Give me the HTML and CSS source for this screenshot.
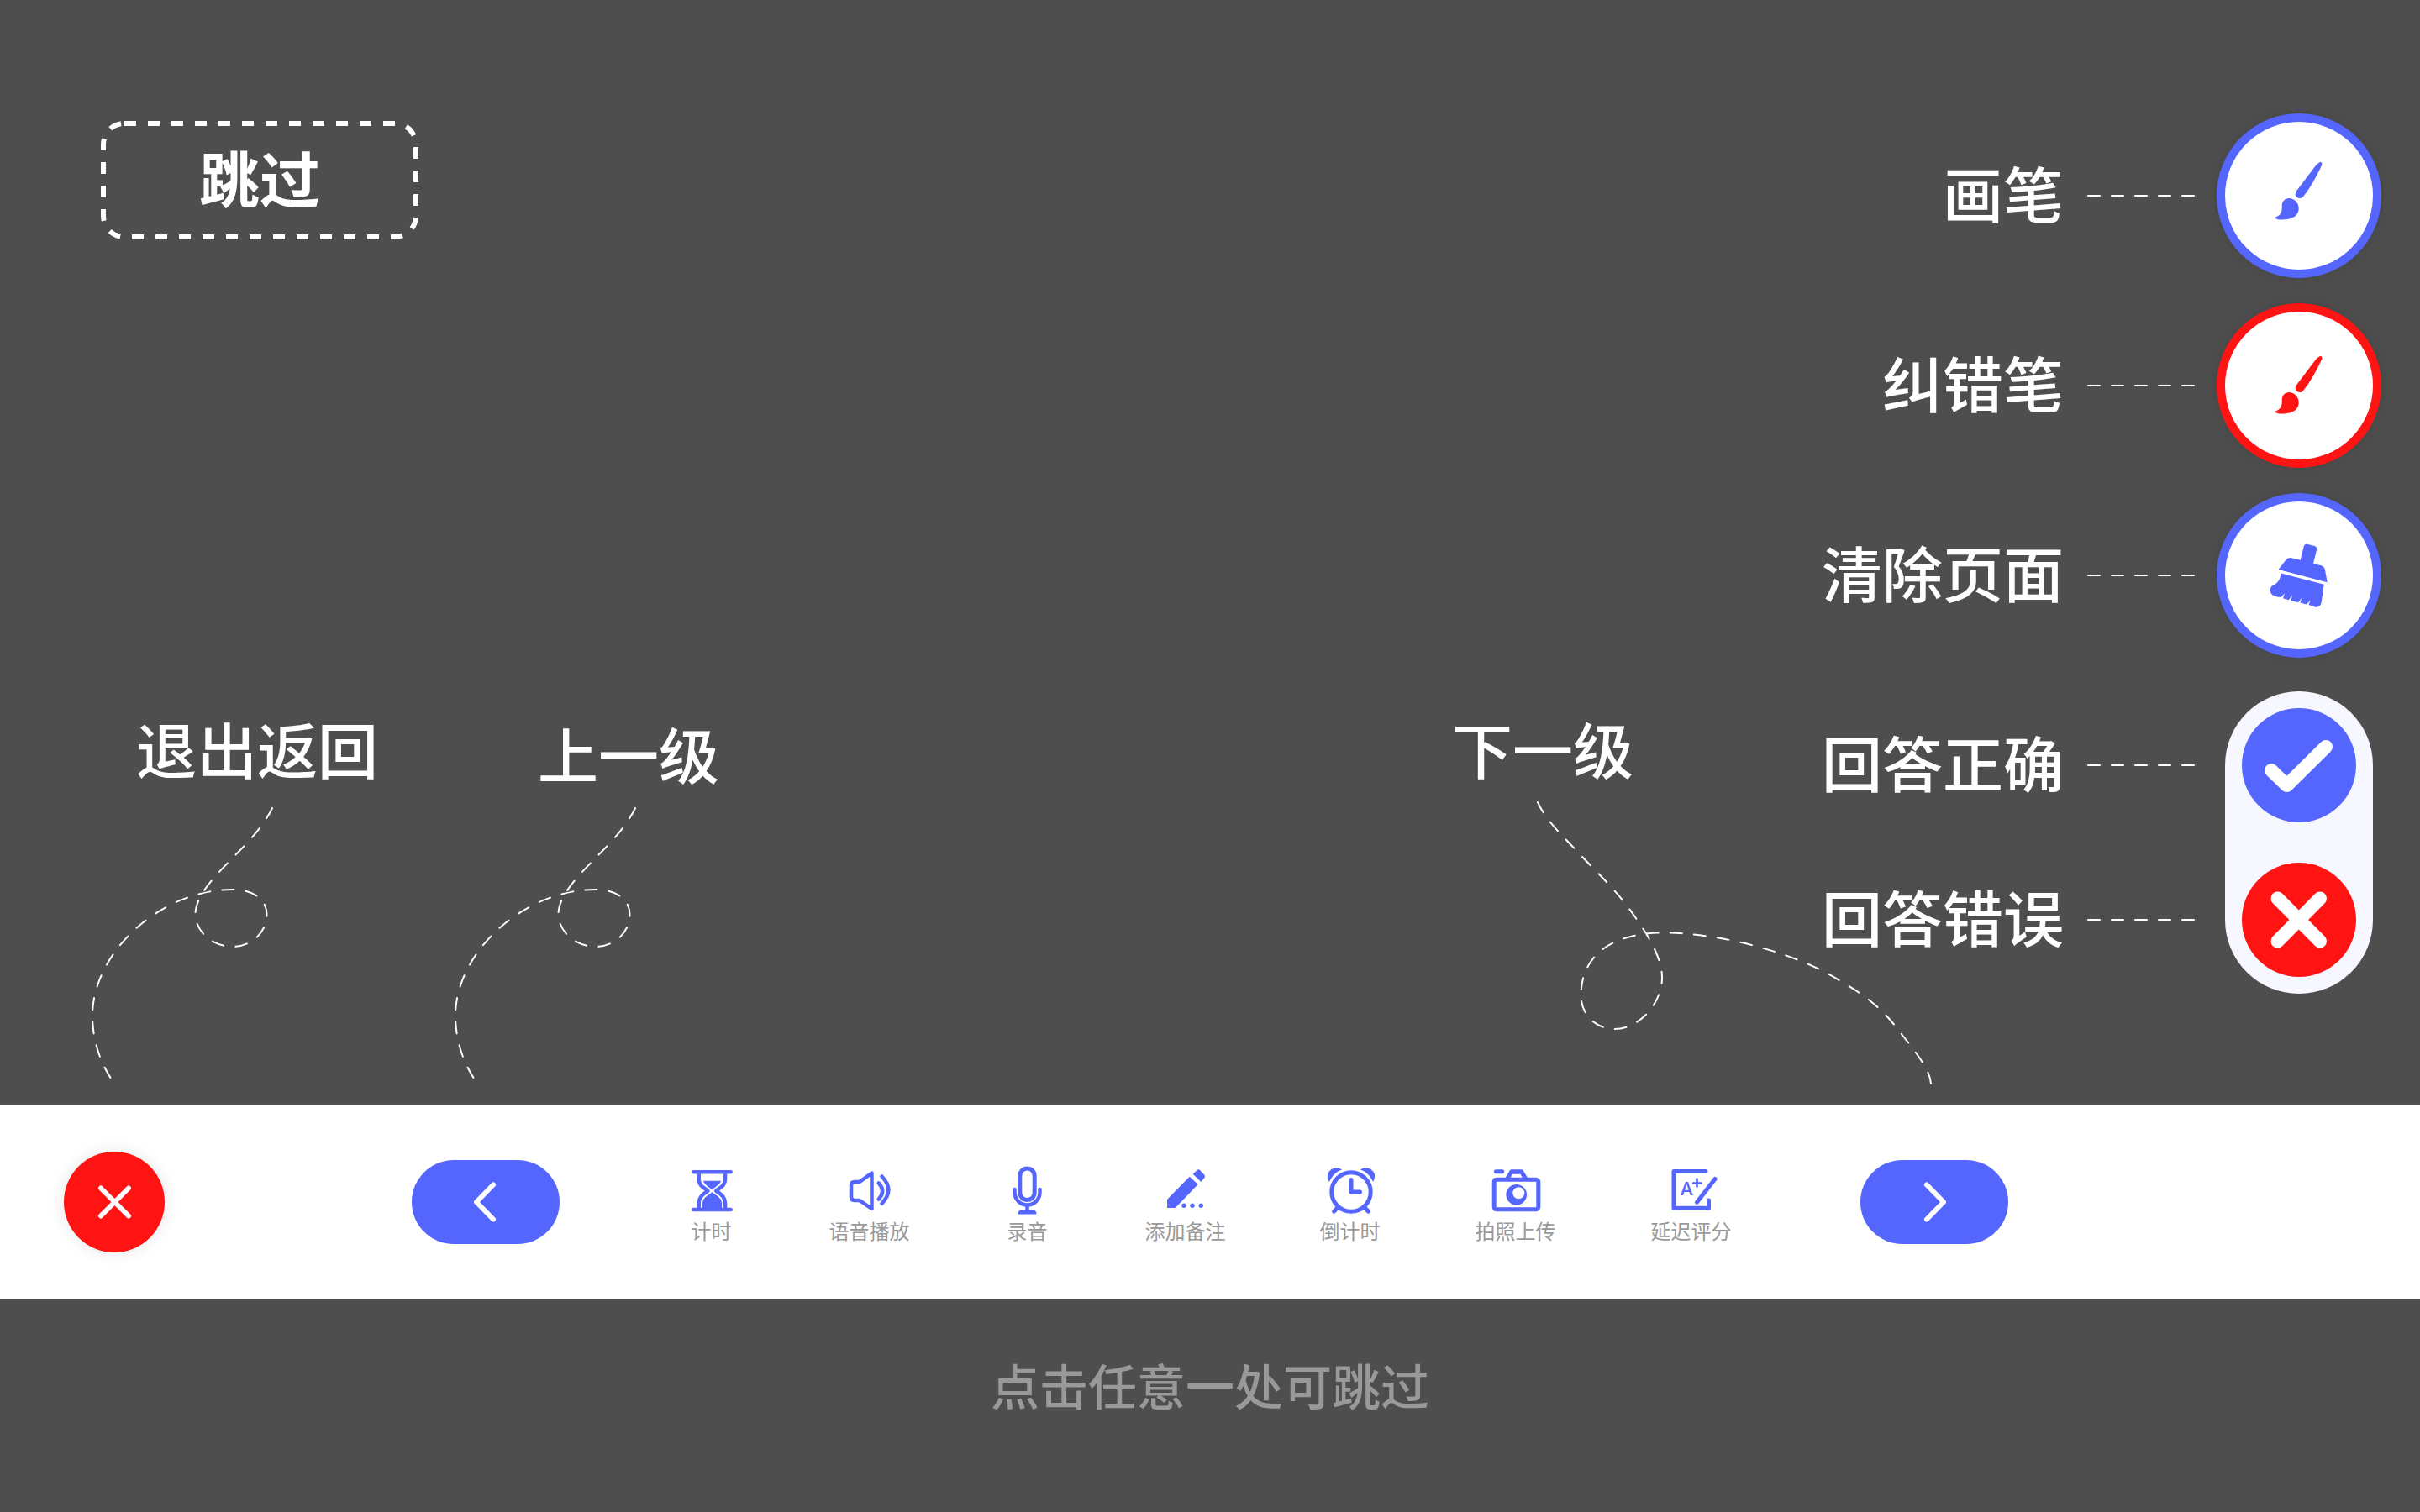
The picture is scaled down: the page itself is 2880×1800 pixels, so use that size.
FILE: index.html
```html
<!DOCTYPE html>
<html lang="zh-CN">
<head>
<meta charset="utf-8">
<meta name="viewport" content="width=device-width, initial-scale=1">
<title>批改引导</title>
<link rel="stylesheet" href="styles.css">
</head>
<body>
<main class="page">
  <section class="stage">
    <button class="skip" type="button">
      <svg class="skip-frame" aria-hidden="true"><rect class="skip-rect" x="3" y="3" rx="25"/></svg>
      <span>跳过</span>
    </button>

    <div class="callouts">
      <div class="callout callout-exit">
        <p class="callout-text">退出返回</p>
        <svg class="curve" width="220" height="332" viewBox="108 960 220 332" aria-hidden="true"><path pathLength="658" d="M324 962C315 981 297 1001 280 1018C262 1037 232.500 1064 232.500 1088C232.500 1109 253 1127 277 1127C299 1127 317.500 1110 317.500 1089C317.500 1069 299 1059 277 1059C190 1059 110 1135 110 1209C110 1236 118 1262 131.500 1283"/></svg>
      </div>
      <div class="callouts-nav">
        <div class="callout callout-prev">
          <p class="callout-text">上一级</p>
          <svg class="curve" width="220" height="332" viewBox="108 960 220 332" aria-hidden="true"><path pathLength="658" d="M324 962C315 981 297 1001 280 1018C262 1037 232.500 1064 232.500 1088C232.500 1109 253 1127 277 1127C299 1127 317.500 1110 317.500 1089C317.500 1069 299 1059 277 1059C190 1059 110 1135 110 1209C110 1236 118 1262 131.500 1283"/></svg>
        </div>
        <div class="callout callout-next">
          <p class="callout-text">下一级</p>
          <svg class="curve" width="472" height="340" viewBox="1828 952 472 340" aria-hidden="true"><path pathLength="938" d="M1830 955C1841 979 1862 997 1883 1020C1903 1041 1923 1060 1939 1082C1957 1107 1978 1137 1978 1164C1978 1195 1950 1225 1922 1225C1898 1225 1881.500 1207 1881.500 1185C1881.500 1137 1919 1110.500 1980 1110.500C2050 1110.500 2140 1136 2189 1167C2213 1181 2235 1196 2253.500 1219C2277 1249 2297 1272 2298 1290"/></svg>
        </div>
      </div>
    </div>

    <div class="side">
      <div class="side-row">
        <label class="side-label" for="pen">画笔</label>
        <svg class="leader" width="128" height="4" aria-hidden="true"><path d="M1 2H128"/></svg>
        <button class="ring ring-blue" id="pen" type="button">
          <svg width="100" height="100" viewBox="0 0 100 100" aria-hidden="true"><path d="M76 10C78 10.500 77.500 13 76.500 15C70 29 63 41 55.500 50.500C53 54 48 54 46 50C45 47 46.500 45 48 43L70 14C72 12 74 10 76 10Z"/><path d="M21 76C27 74 30 71 29.700 63C29.500 57 33 53 38.300 53C44 53 49.700 58 49.700 65C49.700 72 45 78.500 29 78.500C26 78.500 22.500 78 21 76Z"/></svg>
        </button>
      </div>
      <div class="side-row">
        <label class="side-label" for="fix">纠错笔</label>
        <svg class="leader" width="128" height="4" aria-hidden="true"><path d="M1 2H128"/></svg>
        <button class="ring ring-red" id="fix" type="button">
          <svg width="100" height="100" viewBox="0 -5 100 100" aria-hidden="true"><path d="M76 10C78 10.500 77.500 13 76.500 15C70 29 63 41 55.500 50.500C53 54 48 54 46 50C45 47 46.500 45 48 43L70 14C72 12 74 10 76 10Z"/><path d="M21 76C27 74 30 71 29.700 63C29.500 57 33 53 38.300 53C44 53 49.700 58 49.700 65C49.700 72 45 78.500 29 78.500C26 78.500 22.500 78 21 76Z"/></svg>
        </button>
      </div>
      <div class="side-row">
        <label class="side-label" for="clear">清除页面</label>
        <svg class="leader" width="128" height="4" aria-hidden="true"><path d="M1 2H128"/></svg>
        <button class="ring ring-blue" id="clear" type="button">
          <svg width="100" height="100" viewBox="0 0 100 100" aria-hidden="true"><path d="M59.500 12.700Q56.500 12.500 55.700 15.500L51.700 31.700L41 29.200Q37 28.600 34.500 31.500L25.500 43L83.700 58.300L81 43.500Q80 39.200 76.500 38.300L67 36L71 19.500Q71.500 15.800 68.500 15Z"/><path d="M28.700 47.500L79.700 60.800L76.700 82Q75.300 88.500 69.500 87.700L61.500 85L63.700 79.500L59 84.600L51.300 82.500L53.700 76.500L49 82.200L40.300 79.800L42 73.800L37.700 79.200L31 77.200L32.900 71.200L28.300 76.200L22 75Q15.500 73 15.700 67.200Q16.200 62 21.700 60.500Q27.500 56.500 28.700 47.500Z"/></svg>
        </button>
      </div>
      <div class="verdict">
        <div class="verdict-labels">
          <div class="verdict-row">
            <label class="side-label" for="right">回答正确</label>
            <svg class="leader" width="128" height="4" aria-hidden="true"><path d="M1 2H128"/></svg>
          </div>
          <div class="verdict-row">
            <label class="side-label" for="wrong">回答错误</label>
            <svg class="leader" width="128" height="4" aria-hidden="true"><path d="M1 2H128"/></svg>
          </div>
        </div>
        <div class="verdict-pill">
          <button class="mark mark-right" id="right" type="button"><svg width="136" height="136" viewBox="0 0 136 136" aria-hidden="true"><path d="M35 74L53.500 92L100 46"/></svg></button>
          <button class="mark mark-wrong" id="wrong" type="button"><svg width="136" height="136" viewBox="0 0 136 136" aria-hidden="true"><path d="M42.500 42.500L93 93.500M93 42.500L42.500 93.500"/></svg></button>
        </div>
      </div>
    </div>
  </section>

  <nav class="toolbar">
    <button class="close" type="button" aria-label="退出返回"><svg width="60" height="60" viewBox="0 0 60 60" aria-hidden="true"><path d="M14 13.500L47 46.500M47 13.500L14 46.500"/></svg></button>
    <div class="toolbar-main">
      <button class="step" type="button" aria-label="上一级"><svg width="60" height="60" viewBox="0 0 60 60" aria-hidden="true"><path d="M39 9.500L19 30L39 50.500"/></svg></button>
      <div class="tools">
        <div class="tools-group">
          <button class="tool" type="button">
            <svg class="tool-icon" viewBox="0 0 64 64" aria-hidden="true"><path class="line" d="M10.300 14.200H54.700M10.300 59H54.700M16.700 15V22C16.700 30 21 32 27.500 36.700C20 41 16.700 45 16.700 51V58M48 15V22C48 30 43.700 32 37.200 36.700C44.700 41 48 45 48 51V58"/><path d="M22 24.700H43C41.500 29.500 37 31 32.400 35.500C27.500 31 23.500 29.500 22 24.700ZM32.400 38C36 42 44 44 44 51.500V58H21V51.500C21 44 29 42 32.400 38Z"/></svg>
            <span>计时</span>
          </button>
          <button class="tool" type="button">
            <svg class="tool-icon" viewBox="0 0 64 64" aria-hidden="true"><path class="line" d="M34.500 15.500L20 26H14Q10 26 10 30V44Q10 48 14 48H20L34.500 58ZM42.800 27.500Q51.500 37 42.800 46.500M46.500 19.500Q62 35.500 46.500 51.800"/></svg>
            <span>语音播放</span>
          </button>
          <button class="tool" type="button">
            <svg class="tool-icon" viewBox="0 0 64 64" aria-hidden="true"><rect class="line heavy" x="22.800" y="10" width="17.400" height="37.500" rx="8.700"/><path class="line" d="M16.500 35V38.500A15 15 0 0 0 46.500 38.500V35M31.500 54V61"/><path d="M20.500 64.500Q20.500 59.500 25 59.500H38Q42.500 59.500 42.500 64.500Z"/></svg>
            <span>录音</span>
          </button>
          <button class="tool" type="button">
            <svg class="tool-icon" viewBox="0 0 64 64" aria-hidden="true"><path d="M45.700 12Q47.300 10.500 49 12L54.500 18Q55.500 19.700 54.500 21L50.300 26L40.700 16.700ZM36.700 19.700L46.700 29L19.700 57H10V47Z"/><circle cx="30" cy="54.300" r="2.700"/><circle cx="40" cy="54.300" r="2.700"/><circle cx="50.300" cy="54.300" r="2.700"/></svg>
            <span>添加备注</span>
          </button>
        </div>
        <div class="tools-group tools-group-tight">
          <button class="tool" type="button">
            <svg class="tool-icon" viewBox="0 0 64 64" aria-hidden="true"><circle class="line heavy" cx="33" cy="38" r="23.200"/><path class="line heavy" d="M33 23.500V38H43.500M16.500 57L12.500 61.200M49.500 57L53.500 61.200"/><path d="M7 26C4 21 4 16.500 7.500 13C11 9 17 8 22 11.500C15 14 10 19 7 26ZM59 26C62 21 62 16.500 58.500 13C55 9 49 8 44 11.500C51 14 56 19 59 26Z"/></svg>
            <span>倒计时</span>
          </button>
          <button class="tool" type="button">
            <svg class="tool-icon" viewBox="0 0 64 64" aria-hidden="true"><rect class="line heavy" x="6.200" y="23.200" width="52.600" height="35.600" rx="3"/><path class="line heavy" d="M8.300 13.700H15.700"/><path fill-rule="evenodd" d="M19 22L24.700 12.500Q25.500 11.300 27 11.300H38.500Q40 11.300 40.800 12.500L46.500 22H40.500L37.300 16.700H28L25 22ZM32.700 29A12.300 12.300 0 1 0 32.700 53.600A12.300 12.300 0 1 0 32.700 29ZM35.300 32.300A7 7 0 1 1 35.300 46.300A7 7 0 1 1 35.300 32.300Z"/></svg>
            <span>拍照上传</span>
          </button>
          <button class="tool" type="button">
            <svg class="tool-icon" viewBox="0 0 64 64" aria-hidden="true"><path class="line heavy" d="M49 13.400H11V57.200H52.500V48M60 22.500L38.500 50.300"/><path class="line thin" d="M38.500 22.500V31.500M34 27.500H43.500"/><text class="grade" x="19" y="42">A</text></svg>
            <span>延迟评分</span>
          </button>
        </div>
      </div>
      <button class="step" type="button" aria-label="下一级"><svg width="60" height="60" viewBox="0 0 60 60" aria-hidden="true"><path d="M21 9.500L41 30L21 50.500"/></svg></button>
    </div>
  </nav>

  <footer class="hint">点击任意一处可跳过</footer>
</main>
</body>
</html>
```
FILE: styles.css
```css
:root {
  --blue: #5566ff;
  --red: #ff1313;
  --dim: #4e4e4e;
}

* {
  box-sizing: border-box;
}

body {
  margin: 0;
  background: var(--dim);
  color: #fff;
  font-family: "Noto Sans CJK SC", sans-serif;
}

button {
  margin: 0;
  padding: 0;
  border: 0;
  background: none;
  color: inherit;
  font: inherit;
  cursor: pointer;
}

svg {
  display: block;
  flex: none;
}

.page {
  display: flex;
  flex-direction: column;
  min-height: 100vh;
}

/* Stage: the skip button, side tools and callouts share one grid cell */
.stage {
  display: grid;
  flex: 1;
}

.stage > * {
  grid-area: 1 / 1;
}

.skip {
  position: relative;
  align-self: start;
  justify-self: start;
  width: 378px;
  height: 141px;
  margin: 144px 0 0 120px;
  padding-bottom: 10px;
  font-size: 72px;
  line-height: 72px;
  font-weight: 700;
}

.skip-frame {
  position: absolute;
  inset: 0;
  width: 100%;
  height: 100%;
}

.skip-rect {
  width: calc(100% - 6px);
  height: calc(100% - 6px);
  fill: none;
  stroke: #fff;
  stroke-width: 6;
  stroke-dasharray: 14 14;
}

/* Callouts follow the same columns as the toolbar below */
.callouts {
  display: grid;
  grid-template-columns: 1fr 1900px 1fr;
  align-items: end;
  padding-bottom: 24px;
}

.callouts-nav {
  display: flex;
  justify-content: space-between;
  align-items: flex-end;
  padding: 0 90px 0 50px;
}

.callout {
  display: flex;
  flex-direction: column;
}

.callout-text {
  margin: 0;
  font-size: 72px;
  line-height: 80px;
  font-weight: 500;
  white-space: nowrap;
}

.callout-exit {
  gap: 30px;
  padding-left: 108px;
}

.callout-exit .callout-text {
  padding-left: 54px;
}

.callout-prev {
  gap: 24px;
}

.callout-prev .callout-text {
  padding-left: 100px;
}

.callout-next {
  gap: 22px;
}

.callout-next .callout-text {
  margin-left: -100px;
}

.curve,
.leader {
  fill: none;
  stroke: #fff;
  stroke-width: 2;
  stroke-linecap: round;
  stroke-dasharray: 14 14;
}

/* Side tools */
.side {
  display: flex;
  flex-direction: column;
  align-self: start;
  justify-self: end;
  align-items: flex-end;
  gap: 30px;
  padding: 135px 46px 0 0;
}

.side-row,
.verdict-row {
  display: flex;
  align-items: center;
}

.side-label {
  margin-right: 28px;
  padding-bottom: 10px;
  font-size: 72px;
  line-height: 72px;
  font-weight: 500;
}

.ring {
  display: grid;
  place-items: center;
  width: 196px;
  height: 196px;
  margin-left: 26px;
  border: 10px solid;
  border-radius: 50%;
  background: #fff;
  box-shadow: 0 0 20px rgba(0, 0, 0, 0.1);
}

.ring svg {
  fill: currentColor;
}

.ring-blue {
  color: var(--blue);
}

.ring-red {
  color: var(--red);
}

.verdict {
  display: flex;
  gap: 36px;
  padding: 10px 10px 0 0;
}

.verdict-labels,
.verdict-pill {
  display: flex;
  flex-direction: column;
  gap: 48px;
  padding: 20px 0;
}

.verdict-pill {
  padding: 20px;
  border-radius: 88px;
  background: #f7f7ff;
}

.verdict-row {
  height: 136px;
  justify-content: flex-end;
}

.mark {
  width: 136px;
  height: 136px;
  border-radius: 50%;
}

.mark svg {
  fill: none;
  stroke: #fff;
  stroke-width: 16;
  stroke-linecap: round;
  stroke-linejoin: round;
}

.mark-right {
  background: var(--blue);
}

.mark-wrong {
  background: var(--red);
}

/* Toolbar */
.toolbar {
  display: grid;
  grid-template-columns: 1fr 1900px 1fr;
  align-items: center;
  height: 230px;
  background: #fff;
}

.close,
.step {
  display: grid;
  place-items: center;
}

.close svg,
.step svg {
  fill: none;
  stroke: #fff;
  stroke-width: 6;
  stroke-linecap: round;
  stroke-linejoin: round;
}

.close {
  width: 120px;
  height: 120px;
  margin-left: 76px;
  border-radius: 50%;
  background: var(--red);
  box-shadow: 0 0 20px rgba(0, 0, 0, 0.1);
}

.toolbar-main {
  display: flex;
  align-items: center;
  justify-content: space-between;
}

.step {
  width: 176px;
  height: 100px;
  border-radius: 50px;
  background: var(--blue);
}

.tools {
  display: flex;
  gap: 112px;
  padding-left: 3px;
}

.tools-group {
  display: flex;
  gap: 116px;
}

.tools-group-tight {
  gap: 113px;
}

.tool {
  display: flex;
  flex-direction: column;
  align-items: center;
  gap: 4px;
  color: #999;
  font-size: 24px;
  line-height: 32px;
}

.tool-icon {
  width: 64px;
  height: 64px;
  margin: 0 -8px;
  overflow: visible;
  fill: var(--blue);
}

.line {
  fill: none;
  stroke: var(--blue);
  stroke-width: 4.5;
  stroke-linecap: round;
  stroke-linejoin: round;
}

.heavy {
  stroke-width: 5;
}

.thin {
  stroke-width: 2.6;
}

.grade {
  font: 600 22px "Open Sans", sans-serif;
}

.hint {
  height: 254px;
  padding-top: 62px;
  color: #999;
  font-size: 58px;
  line-height: 80px;
  font-weight: 500;
  text-align: center;
}
```
